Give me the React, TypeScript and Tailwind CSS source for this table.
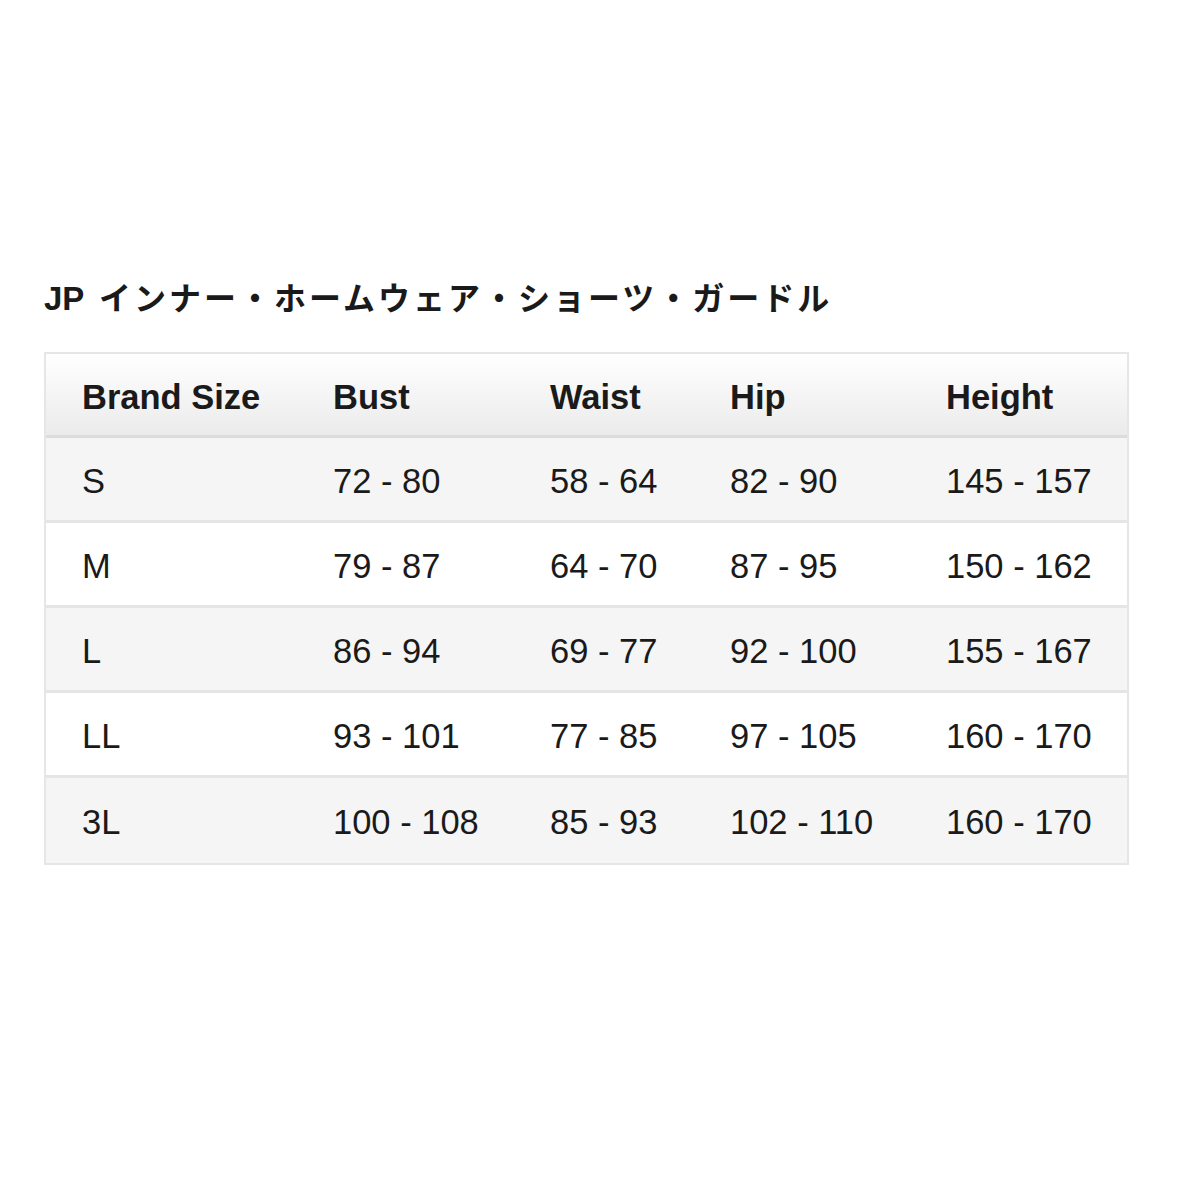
import React from "react";

const rows = [
  ["S", "72 - 80", "58 - 64", "82 - 90", "145 - 157"],
  ["M", "79 - 87", "64 - 70", "87 - 95", "150 - 162"],
  ["L", "86 - 94", "69 - 77", "92 - 100", "155 - 167"],
  ["LL", "93 - 101", "77 - 85", "97 - 105", "160 - 170"],
  ["3L", "100 - 108", "85 - 93", "102 - 110", "160 - 170"],
];

const headers = ["Brand Size", "Bust", "Waist", "Hip", "Height"];

const cols = "grid grid-cols-[251px_217px_180px_216px_1fr]";

export default function App() {
  return (
    <div
      className="w-[1179px] h-[1179px] bg-white text-[#1a1a1a] pt-[276px] pl-[44px]"
      style={{ fontFamily: '"Liberation Sans", Arial, "Noto Sans CJK JP", sans-serif' }}
    >
      <h2 className="text-[33px] font-bold leading-[40px] h-[40px] whitespace-nowrap">
        JP{" "}
        <span style={{ fontFamily: '"Noto Sans CJK JP", sans-serif' }} className="ml-[6px] font-semibold text-[32px] tracking-[3px]">
          インナー・ホームウェア・ショーツ・ガードル
        </span>
      </h2>
      <div className="mt-[36px] w-[1085px] border-2 border-[#e6e6e6]">
        <div className={`${cols} h-[84px] items-center pt-[6px] bg-linear-to-b from-white to-[#ebebeb] border-b-[3px] border-[#dcdcdc] font-bold text-[34.5px]`}>
          {headers.map((h) => (
            <div key={h} className="pl-[36px]">{h}</div>
          ))}
        </div>
        {rows.map((r, i) => (
          <div
            key={r[0]}
            className={`${cols} h-[85px] items-center pt-[5px] text-[34.5px] ${i % 2 === 0 ? "bg-[#f5f5f5]" : "bg-white"} ${i < rows.length - 1 ? "border-b-[3px] border-[#e5e5e5]" : ""}`}
          >
            {r.map((c, j) => (
              <div key={j} className="pl-[36px]">{c}</div>
            ))}
          </div>
        ))}
      </div>
    </div>
  );
}
